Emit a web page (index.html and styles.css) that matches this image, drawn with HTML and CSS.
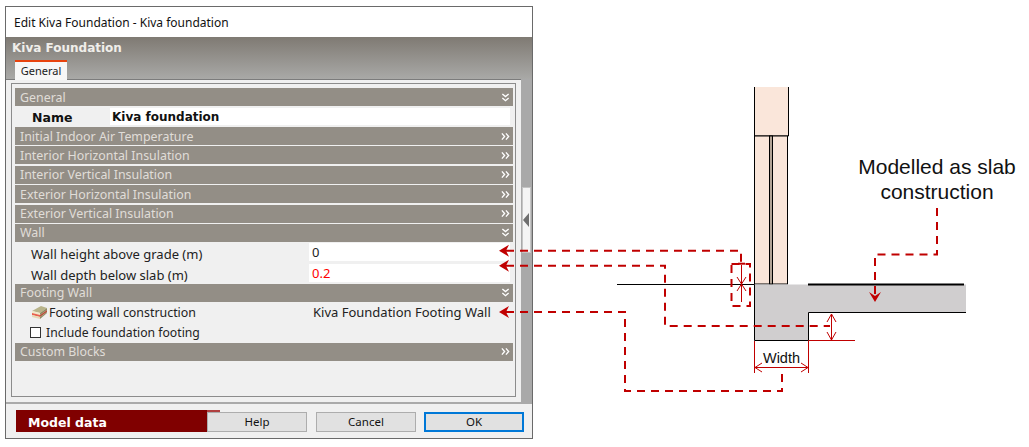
FILE: index.html
```html
<!DOCTYPE html>
<html>
<head>
  <title>Edit Kiva Foundation</title>
  <link rel="stylesheet" href="styles.css">
</head>
<body>

  <div class="dialog">
    <div class="titlebar">Edit Kiva Foundation - Kiva foundation</div>

    <div class="header">
      <div class="header-title">Kiva Foundation</div>
      <div class="tab">General</div>
    </div>

    <div class="body">
      <div class="sheet">
        <div class="panel">
          <div class="bar bar-open">General <svg class="chev" viewBox="0 0 9 10"><path d="M1 1l3.5 3L8 1M1 5.5l3.5 3 3.5-3"/></svg></div>
          <div class="row-name">
            <div class="name-label">Name</div>
            <div class="name-value">Kiva foundation</div>
          </div>
          <div class="bar">Initial Indoor Air Temperature <svg class="chev" viewBox="0 0 10 9"><path d="M1 1l3 3.5-3 3.5M5.5 1l3 3.5-3 3.5"/></svg></div>
          <div class="bar">Interior Horizontal Insulation <svg class="chev" viewBox="0 0 10 9"><path d="M1 1l3 3.5-3 3.5M5.5 1l3 3.5-3 3.5"/></svg></div>
          <div class="bar">Interior Vertical Insulation <svg class="chev" viewBox="0 0 10 9"><path d="M1 1l3 3.5-3 3.5M5.5 1l3 3.5-3 3.5"/></svg></div>
          <div class="bar">Exterior Horizontal Insulation <svg class="chev" viewBox="0 0 10 9"><path d="M1 1l3 3.5-3 3.5M5.5 1l3 3.5-3 3.5"/></svg></div>
          <div class="bar">Exterior Vertical Insulation <svg class="chev" viewBox="0 0 10 9"><path d="M1 1l3 3.5-3 3.5M5.5 1l3 3.5-3 3.5"/></svg></div>
          <div class="bar bar-open">Wall <svg class="chev" viewBox="0 0 9 10"><path d="M1 1l3.5 3L8 1M1 5.5l3.5 3 3.5-3"/></svg></div>
          <div class="row">
            <div class="row-label">Wall height above grade (m)</div>
            <div class="row-value input">0</div>
          </div>
          <div class="row">
            <div class="row-label">Wall depth below slab (m)</div>
            <div class="row-value input changed">0.2</div>
          </div>
          <div class="bar bar-open">Footing Wall <svg class="chev" viewBox="0 0 9 10"><path d="M1 1l3.5 3L8 1M1 5.5l3.5 3 3.5-3"/></svg></div>
          <div class="row row-center">
            <div class="row-label with-icon">
              <svg class="layers" viewBox="0 0 17 15">
                <path d="M1 6L10 1l6 2-7 5z" fill="#b9b48a"/>
                <path d="M1 6l8 2 0 2-8-2z" fill="#f3e9c8"/>
                <path d="M9 8l7-5 0 2-7 5z" fill="#8f8b62"/>
                <path d="M1 8l8 2 0 2-8-2z" fill="#e8604c"/>
                <path d="M9 10l7-5 0 2-7 5z" fill="#b8503c"/>
                <path d="M1 10l8 2 0 2-8-2z" fill="#e6d9b4"/>
                <path d="M9 12l7-5 0 1-7 6z" fill="#8f8b62"/>
              </svg>
              Footing wall construction
            </div>
            <div class="row-value plain">Kiva Foundation Footing Wall</div>
          </div>
          <div class="row row-center">
            <div class="row-label with-check"><span class="checkbox"></span>Include foundation footing</div>
          </div>
          <div class="bar">Custom Blocks <svg class="chev" viewBox="0 0 10 9"><path d="M1 1l3 3.5-3 3.5M5.5 1l3 3.5-3 3.5"/></svg></div>
        </div>
      </div>
      <div class="splitter">
        <div class="handle"><span class="handle-arrow"></span></div>
      </div>
    </div>

    <div class="footer">
      <div class="model-data">Model data</div>
      <div class="btn btn-help">Help</div>
      <div class="btn btn-cancel">Cancel</div>
      <div class="btn btn-ok">OK</div>
    </div>
  </div>

  <!-- section drawing and the red leader lines that run over the dialog -->
  <svg class="drawing" width="1029" height="447" viewBox="0 0 1029 447">
    <!-- wall -->
    <rect x="754.5" y="87" width="34" height="49" fill="#fae6da"/>
    <path d="M754.5 87V136H788.5V87" fill="none" stroke="#000"/>
    <rect x="754.5" y="136" width="33" height="148" fill="#fae6da" stroke="#000"/>
    <rect x="769.5" y="136" width="3" height="148" fill="#b3a496" stroke="#000"/>

    <!-- slab and footing -->
    <path d="M754.5 284.5H966V312H808.5V340.5H754.5Z" fill="#d0cecf"/>
    <path d="M617 284.5H754.5V340.5H808.5V312.5H966" fill="none" stroke="#000"/>
    <path d="M808 284.5H964" fill="none" stroke="#000" stroke-width="2"/>

    <!-- dimensions -->
    <g class="dim">
      <path d="M754.5 341V373M808.5 341V373M808.5 340.5H855"/>
      <path d="M755 367.5H808M762 363l-7 4.5 7 4.5M801 363l7 4.5-7 4.5"/>
      <path d="M831.5 314V340M827 322l4.500-8 4.500 8M827 332l4.500 8 4.500-8"/>
      <path d="M741.5 265V302M737 277l4.500 7 4.500-7M737 291l4.500-7 4.500 7"/>
    </g>
    <text class="label-small" x="781.5" y="363" text-anchor="middle">Width</text>

    <!-- leaders -->
    <g class="leader">
      <path d="M506 250.7H741V262"/>
      <path d="M506 265.7H665V326H830"/>
      <path d="M506 312H625V391H782V370"/>
      <path d="M731.5 264H750V306H731.5Z"/>
      <path d="M937 208V254.5H875V294"/>
    </g>
    <path class="tick" d="M738 263.7H745"/>
    <path class="head" d="M499 250.7L509 244.700L506 250.7L509 256.700Z"/>
    <path class="head" d="M499 265.7L509 259.700L506 265.7L509 271.700Z"/>
    <path class="head" d="M499 312L509 306L506 312L509 318Z"/>
    <path class="head" d="M875 302L869 292L875 296L881 292Z"/>

    <text class="label-big" x="937" y="174" text-anchor="middle">Modelled as slab</text>
    <text class="label-big" x="937" y="199" text-anchor="middle">construction</text>
  </svg>

</body>
</html>
```

FILE: styles.css
```css
body {
  margin: 0;
  background: #fff;
  font-family: "Noto Sans", sans-serif;
  position: relative;
  width: 1029px;
  height: 447px;
  overflow: hidden;
}

.dialog {
  margin: 6px 0 0 5px;
  width: 528px;
  height: 433px;
  box-sizing: border-box;
  border: 1px solid #6a6a6a;
  display: flex;
  flex-direction: column;
  background: #f0f0f0;
}

.titlebar {
  height: 30px;
  flex: none;
  background: #fff;
  padding: 7px 0 0 8px;
  box-sizing: border-box;
  font-size: 12px;
  line-height: 17px;
  color: #111;
}

.header {
  height: 42px;
  flex: none;
  box-sizing: border-box;
  background: linear-gradient(#7f7a73, #a9a9a7);
  position: relative;
}

.header-title {
  padding: 3px 0 0 6px;
  font-family: "DejaVu Sans", sans-serif;
  font-weight: bold;
  font-size: 12px;
  line-height: 16px;
  color: #f0eeea;
}

.tab {
  margin: 4px 0 0 9px;
  width: 52px;
  height: 20px;
  box-sizing: border-box;
  background: #f7f7f7;
  border-top: 2px solid #e8430e;
  font-size: 11px;
  line-height: 18px;
  text-align: center;
  color: #222;
  position: relative;
  z-index: 1;
}

.body {
  flex: 1;
  display: flex;
  min-height: 0;
}

.sheet {
  width: 515px;
  box-sizing: border-box;
  border-top: 1px solid #7c7c7c;
  border-bottom: 2px solid #aaa;
  padding: 3px 5px 5px 5px;
}

.panel {
  height: 100%;
  box-sizing: border-box;
  border: 1px solid #8c8c8c;
  padding: 4px 2px 0 3px;
}

.bar {
  height: 18px;
  margin-bottom: 1.4px;
  padding: 0 3px 0 5px;
  background: #938e86;
  color: #e0ddd8;
  font-size: 12.4px;
  line-height: 17px;
  display: flex;
  justify-content: space-between;
  align-items: center;
}

.bar-open {
  margin-bottom: 0;
}

.chev {
  width: 9px;
  height: 9px;
  fill: none;
  stroke: #fff;
  stroke-width: 1.5;
}

.row-name {
  display: grid;
  grid-template-columns: 95px 400px;
  height: 20px;
  margin-top: 1px;
}

.name-label {
  padding: 2px 0 0 17px;
  font-family: "DejaVu Sans", sans-serif;
  font-weight: bold;
  font-size: 12.5px;
  line-height: 17px;
  color: #111;
}

.name-value {
  margin: 1px 0 2px;
  background: #fff;
  padding: 1px 0 0 2px;
  font-family: "DejaVu Sans", sans-serif;
  font-weight: bold;
  font-size: 12px;
  line-height: 16px;
  color: #111;
}

.row {
  display: grid;
  grid-template-columns: 294px 201px;
  height: 21px;
  font-size: 13px;
  color: #222;
}

.row-center {
  height: 20.5px;
  align-items: center;
  box-sizing: border-box;
}

.row-label {
  padding: 4px 0 0 16px;
  line-height: 17px;
}

.row-value {
  line-height: 17px;
}

.input {
  margin: 1px 0 2px;
  background: #fff;
  padding: 1px 0 0 3px;
  line-height: 16px;
}

.changed {
  color: #f00;
}

.plain {
  padding-left: 4px;
}

.row-center .row-label {
  padding-top: 0;
}

.with-icon {
  display: flex;
  align-items: center;
  font-size: 12.4px;
}

.layers {
  width: 17px;
  height: 15px;
  margin-right: 1px;
}

.with-check {
  display: flex;
  align-items: center;
  padding-left: 15px;
  white-space: nowrap;
  grid-column: 1 / 3;
  font-size: 12.2px;
}

.checkbox {
  width: 9px;
  height: 9px;
  border: 1.5px solid #333;
  background: #fff;
  margin-right: 5px;
}

.splitter {
  flex: 1;
  background: #a9a9a9;
  padding: 108px 1px 0 1px;
  box-sizing: border-box;
}

.handle {
  height: 66px;
  box-sizing: border-box;
  background: #f4f4f4;
  border: 1px solid #c4c4c4;
  display: flex;
  align-items: center;
}

.handle-arrow {
  width: 0;
  height: 0;
  border-top: 7px solid transparent;
  border-bottom: 7px solid transparent;
  border-right: 6px solid #6e6e6e;
}

.footer {
  height: 34px;
  flex: none;
  display: flex;
  align-items: flex-start;
  padding: 6px 0 0 10px;
  box-sizing: border-box;
}

.model-data {
  width: 191px;
  height: 22px;
  background: #800000;
  padding-left: 12px;
  box-sizing: border-box;
  color: #fff;
  font-family: "DejaVu Sans", sans-serif;
  font-weight: bold;
  font-size: 12.5px;
  line-height: 25px;
  position: relative;
}

.model-data::after {
  content: "";
  position: absolute;
  left: 191px;
  top: 0;
  width: 13px;
  height: 2px;
  background: #b04040;
}

.btn {
  width: 100px;
  height: 20px;
  margin-top: 2px;
  box-sizing: border-box;
  background: #e1e1e1;
  border: 1px solid #adadad;
  font-size: 11.5px;
  line-height: 18px;
  text-align: center;
  color: #111;
}

.btn-cancel {
  margin-left: 9px;
}

.btn-ok {
  margin-left: 8px;
  border: 2px solid #0078d7;
  line-height: 16px;
}

.drawing {
  position: absolute;
  left: 0;
  top: 0;
}

.dim path {
  fill: none;
  stroke: #c00000;
  stroke-width: 1;
}

.leader path {
  fill: none;
  stroke: #c00000;
  stroke-width: 2;
  stroke-dasharray: 8 6;
}

.tick {
  fill: none;
  stroke: #c00000;
  stroke-width: 2;
}

.head {
  fill: #c00000;
}

.label-small {
  font-family: "Liberation Sans", sans-serif;
  font-size: 14.5px;
  fill: #111;
}

.label-big {
  font-family: "Liberation Sans", sans-serif;
  font-size: 21px;
  fill: #111;
}
```
